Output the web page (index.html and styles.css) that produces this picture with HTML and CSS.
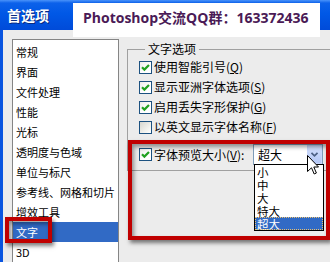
FILE: index.html
```html
<!DOCTYPE html>
<html lang="zh-CN">
<head>
<meta charset="utf-8">
<title>首选项</title>
<link rel="stylesheet" href="styles.css">
</head>
<body>
<div class="win">
  <div class="titlebar"><span class="title">首选项</span></div>
  <div class="watermark">Photoshop交流QQ群：163372436</div>
  <div class="main">
    <ul class="list">
      <li>常规</li>
      <li>界面</li>
      <li>文件处理</li>
      <li>性能</li>
      <li>光标</li>
      <li>透明度与色域</li>
      <li>单位与标尺</li>
      <li>参考线、网格和切片</li>
      <li>增效工具</li>
      <li class="sel">文字<span class="mark mark-sm"></span></li>
      <li>3D</li>
    </ul>
    <div class="panel">
      <fieldset class="group">
        <legend>文字选项</legend>
        <div class="row"><span class="cb on"><svg viewBox="0 0 11 11" width="11" height="11"><path d="M2 5.2 L4.4 7.6 L9 3" fill="none" stroke="#21a121" stroke-width="2.2"/></svg></span><span>使用智能引号(<u>Q</u>)</span></div>
        <div class="row"><span class="cb on"><svg viewBox="0 0 11 11" width="11" height="11"><path d="M2 5.2 L4.4 7.6 L9 3" fill="none" stroke="#21a121" stroke-width="2.2"/></svg></span><span>显示亚洲字体选项(<u>S</u>)</span></div>
        <div class="row"><span class="cb on"><svg viewBox="0 0 11 11" width="11" height="11"><path d="M2 5.2 L4.4 7.6 L9 3" fill="none" stroke="#21a121" stroke-width="2.2"/></svg></span><span>启用丢失字形保护(<u>G</u>)</span></div>
        <div class="row"><span class="cb"></span><span>以英文显示字体名称(<u>F</u>)</span></div>
        <div class="row row-combo">
          <span class="cb on"><svg viewBox="0 0 11 11" width="11" height="11"><path d="M2 5.2 L4.4 7.6 L9 3" fill="none" stroke="#21a121" stroke-width="2.2"/></svg></span>
          <span class="lbl">字体预览大小(<u>V</u>):</span>
          <div class="combo">
            <span class="val">超大</span>
            <span class="btn"><svg viewBox="0 0 15 17" width="15" height="17"><path d="M4 6.5 L7.5 10 L11 6.5" fill="none" stroke="#4d6185" stroke-width="2"/></svg></span>
            <ul class="drop">
              <li><span>小</span></li>
              <li><span>中</span></li>
              <li><span>大</span></li>
              <li><span>特大</span></li>
              <li class="cur"><span>超大</span></li>
            </ul>
            <svg class="cursor" viewBox="0 0 12 20" width="12" height="20"><path d="M0.5 0.5 L0.5 16.5 L4.5 12.8 L7.2 19 L9.4 18 L6.8 12 L11.5 12 Z" fill="#fff" stroke="#000" stroke-width="1" stroke-linejoin="miter"/></svg>
          </div>
        </div>
      </fieldset>
      <div class="mark mark-lg"></div>
    </div>
  </div>
</div>
</body>
</html>
```

FILE: styles.css
```css
* {
  box-sizing: border-box;
  margin: 0;
  padding: 0;
}

html,
body {
  width: 330px;
  height: 262px;
  overflow: hidden;
}

body {
  background: #ececec;
  font-family: "Noto Sans CJK SC", sans-serif;
  font-size: 12px;
  color: #000;
}

.win {
  position: relative;
  height: 262px;
  display: flex;
  flex-direction: column;
}

.titlebar {
  height: 30px;
  flex: none;
  background: linear-gradient(#4a93fa 0, #0c61ea 3px, #0058e6 45%, #004bd9 100%);
  color: #fff;
  padding-left: 7px;
}

.title {
  font-weight: bold;
  font-size: 14px;
  line-height: 30px;
  text-shadow: 1px 1px 0 #0a2a80;
}

.watermark {
  position: absolute;
  left: 73px;
  top: 3px;
  width: 247px;
  height: 34px;
  background: #fff;
  padding: 3px 0 0 10px;
  font: bold 14px/24px "Open Sans", "Noto Sans CJK SC", sans-serif;
  color: #4a1a56;
  white-space: nowrap;
}

.main {
  flex: 1;
  min-height: 0;
  display: flex;
  align-items: flex-start;
  border-left: 3px solid #0a55e0;
}

.list {
  list-style: none;
  flex: none;
  margin: 9px 0 0 9px;
  width: 107px;
  height: 223px;
  background: #fff;
  border: 1px solid #858585;
  border-bottom: none;
  padding-top: 2px;
  font-size: 11px;
}

.list li {
  position: relative;
  height: 20px;
  line-height: 20px;
  padding-left: 3px;
  white-space: nowrap;
}

.list li.sel {
  background: #316ac5;
  color: #fff;
}

.mark {
  position: absolute;
  border: 4px solid #c00000;
  box-shadow: 2px 3px 4px rgba(0, 0, 0, 0.5), inset 2px 3px 4px rgba(0, 0, 0, 0.4);
  pointer-events: none;
}

.mark-sm {
  left: -8px;
  top: -5px;
  width: 47px;
  height: 26px;
}

.panel {
  position: relative;
  flex: 1;
  margin-left: 8px;
}

.group {
  margin-top: 12px;
  border: 1px solid #a0a0a0;
  border-right: none;
  padding: 1px 0 5px 11px;
  min-width: 0;
}

.group legend {
  margin-left: 6px;
  padding: 0 3px;
  font-size: 12px;
  line-height: 14px;
}

.row {
  display: flex;
  align-items: center;
  gap: 2px;
  height: 20px;
  line-height: 20px;
  white-space: nowrap;
}

.row u {
  text-decoration: underline;
  text-underline-offset: 1px;
}

.row-combo {
  height: 21px;
  margin-top: 7px;
}

.cb {
  flex: none;
  width: 13px;
  height: 13px;
  border: 1px solid #1c5180;
  background: linear-gradient(135deg, #d6d6cf 0, #f4f4f0 70%, #fff 100%);
  display: flex;
  align-items: center;
  justify-content: center;
}

.cb.on {
  background: linear-gradient(135deg, #ececea 0, #fff 60%);
}

.lbl {
  width: 97px;
}

.combo {
  position: relative;
  width: 70px;
  height: 21px;
  border: 1px solid #7f9db9;
  background: #fff;
  display: flex;
  align-items: stretch;
  padding-left: 4px;
}

.val {
  flex: 1;
  line-height: 19px;
}

.btn {
  width: 15px;
  border: 1px solid #c8d6fb;
  background: linear-gradient(#d4e0fd, #b3c7f5);
  display: flex;
  align-items: center;
  justify-content: center;
}

.drop {
  position: absolute;
  list-style: none;
  left: 0;
  top: 19px;
  width: 70px;
  background: #fff;
  border: 1px solid #000;
  z-index: 2;
}

.drop li {
  height: 13px;
  padding-left: 2px;
  display: flex;
  align-items: center;
  overflow: hidden;
}

.drop li span {
  font-size: 11.5px;
  line-height: 12px;
}

.drop li.cur {
  background: #316ac5;
  color: #fff;
  outline: 1px dotted #e8c070;
  outline-offset: -1px;
}

.cursor {
  position: absolute;
  left: 53px;
  top: 10px;
  z-index: 3;
}

.mark-lg {
  left: 1px;
  top: 110px;
  width: 202px;
  height: 100px;
}
```
